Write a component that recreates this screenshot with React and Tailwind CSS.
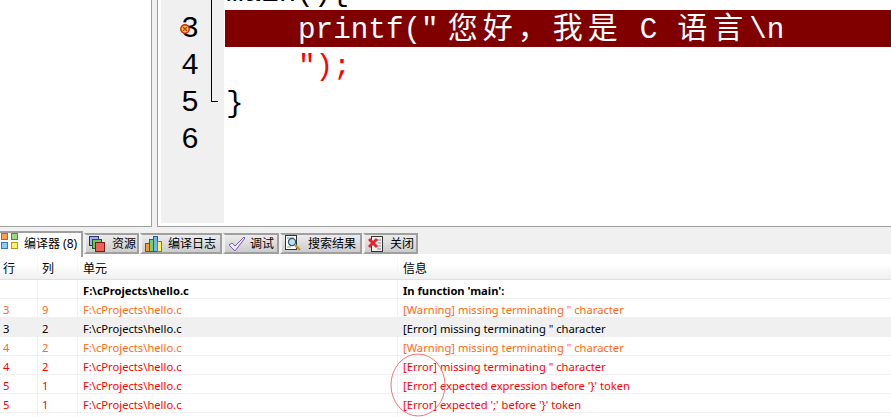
import React from "react";

const uiFont = "font-['Noto_Sans','Noto_Sans_CJK_SC',sans-serif]";
const codeFont = "font-['Liberation_Mono','Noto_Sans_CJK_SC',monospace]";

const rows = [
  { line: "", col: "", unit: "F:\\cProjects\\hello.c", msg: "In function 'main':", tone: "text-black font-bold" },
  { line: "3", col: "9", unit: "F:\\cProjects\\hello.c", msg: "[Warning] missing terminating \" character", tone: "text-[#ff6a13]" },
  { line: "3", col: "2", unit: "F:\\cProjects\\hello.c", msg: "[Error] missing terminating \" character", tone: "text-black bg-[#f0f0f0]" },
  { line: "4", col: "2", unit: "F:\\cProjects\\hello.c", msg: "[Warning] missing terminating \" character", tone: "text-[#ff6a13]" },
  { line: "4", col: "2", unit: "F:\\cProjects\\hello.c", msg: "[Error] missing terminating \" character", tone: "text-[#ff0000]" },
  { line: "5", col: "1", unit: "F:\\cProjects\\hello.c", msg: "[Error] expected expression before '}' token", tone: "text-[#ff0000]" },
  { line: "5", col: "1", unit: "F:\\cProjects\\hello.c", msg: "[Error] expected ';' before '}' token", tone: "text-[#ff0000]" },
  { line: "", col: "", unit: "", msg: "", tone: "" },
];

const GridIcon = () => (
  <svg width="17" height="16" viewBox="0 0 17 16">
    <rect x="0.5" y="0.5" width="6" height="6" fill="#ffa05a" stroke="#e0501a" />
    <rect x="10.5" y="0.5" width="6" height="6" fill="#9ad884" stroke="#4a8a3a" />
    <rect x="0.5" y="9.5" width="6" height="6" fill="#8dc8f8" stroke="#3a78b8" />
    <rect x="10.5" y="9.5" width="6" height="6" fill="#fff06a" stroke="#b09a20" />
  </svg>
);

const LayersIcon = () => (
  <svg width="16" height="16" viewBox="0 0 16 16">
    <rect x="0.5" y="0.5" width="9" height="9" fill="#a8a8f0" stroke="#30306a" />
    <rect x="3.5" y="3.5" width="9" height="9" fill="#62c862" stroke="#1f5a1f" />
    <rect x="6.5" y="6.5" width="9" height="9" fill="#f0605a" stroke="#7a1a1a" />
  </svg>
);

const BarsIcon = () => (
  <svg width="17" height="16" viewBox="0 0 17 16">
    <rect x="0.5" y="7.5" width="4" height="8" fill="#f8963e" stroke="#8a4a1a" />
    <rect x="4.5" y="3.5" width="4" height="12" fill="#78d064" stroke="#2f6a2a" />
    <rect x="8.5" y="0.5" width="4" height="15" fill="#74b4f4" stroke="#2a5a90" />
    <rect x="12.5" y="5.5" width="4" height="10" fill="#fff068" stroke="#8a8020" />
  </svg>
);

const CheckIcon = () => (
  <svg width="18" height="16" viewBox="0 0 18 16">
    <path d="M1 9 L4 7 L7 10 L16 1 L17 2 L7 15 Z" fill="#f0eafa" stroke="#7a5ab8" strokeWidth="1" />
  </svg>
);

const SearchDocIcon = () => (
  <svg width="17" height="17" viewBox="0 0 17 17">
    <rect x="0.5" y="0.5" width="11" height="14" fill="#fff" stroke="#333" />
    <path d="M2 3h7M2 12h4" stroke="#999" />
    <circle cx="7" cy="7" r="3.6" fill="#bfe0ee" stroke="#2a5a70" strokeWidth="1.2" />
    <path d="M10 10 L15 15" stroke="#c8901e" strokeWidth="2.4" />
  </svg>
);

const CloseDocIcon = () => (
  <svg width="16" height="16" viewBox="0 0 16 16">
    <rect x="3.5" y="0.5" width="11" height="15" fill="#eee" stroke="#333" />
    <path d="M9 4h4M10 7h3M10 10h3M9 13h4" stroke="#888" />
    <path d="M1 3 L9 11 M9 3 L1 11" stroke="#e8222a" strokeWidth="3" />
  </svg>
);

const tabs = [
  { label: "资源", icon: <LayersIcon />, width: "w-[55px]", gap: "gap-[7px]" },
  { label: "编译日志", icon: <BarsIcon />, width: "w-[82px]", gap: "gap-[6px]" },
  { label: "调试", icon: <CheckIcon />, width: "w-[56px]", gap: "gap-[4px]" },
  { label: "搜索结果", icon: <SearchDocIcon />, width: "w-[82px]", gap: "gap-[6px]" },
  { label: "关闭", icon: <CloseDocIcon />, width: "w-[55px]", gap: "gap-[6px]" },
];

const App = () => {
  return (
    <div className={`relative w-[891px] h-[417px] overflow-hidden bg-white ${uiFont}`}>
      {/* editor area */}
      <div className="flex h-[227px] bg-[#f0f0f0]">
        <div className="w-[152px] h-full bg-white border-r border-b border-[#a0a0a0]"></div>
        <div className="ml-[5px] flex-1 flex h-full bg-white border-l border-b border-[#a0a0a0] overflow-hidden">
          <div className="relative ml-[3px] w-[63px] h-[223px] bg-[#f0f0f0] shrink-0">
            <div className={`flex flex-col -mt-[26px] w-[38px] text-[30px] leading-[37px] text-black text-right ${codeFont}`}>
              {["2", "3", "4", "5", "6"].map((n) => (
                <div key={n} className="h-[37px]">{n === "2" ? "" : n}</div>
              ))}
            </div>
            {/* fold line */}
            <div className="absolute left-[50px] top-0 w-[7px] h-[102px] border-l border-b border-black"></div>
            {/* error marker */}
            <svg className="absolute left-[19px] top-[24px]" width="10" height="10" viewBox="0 0 10 10">
              <circle cx="5" cy="5" r="4.2" fill="#f6d21e" stroke="#d22020" strokeWidth="1.4" />
              <path d="M3 3 L7 7 M7 3 L3 7" stroke="#c83010" strokeWidth="1.2" />
            </svg>
          </div>
          <div className={`flex-1 flex flex-col -mt-[27px] ml-px text-[29.3px] leading-[37px] whitespace-pre ${codeFont}`}>
            <div className="h-[37px] text-black pl-[1px] pt-[2px]">{"main(){"}</div>
            <div className="h-[37px] bg-[#800000] text-white pl-[73px] pt-[2px]">
              {'printf("'}
              <span className="text-[30px] tracking-[5px] ml-[9px]">您好，</span>
              <span className="text-[30px] tracking-[5px]">我是</span>
              <span className="ml-[17px]">C</span>
              <span className="text-[30px] tracking-[6px] ml-[20px]">语言</span>
              <span>{"\\n"}</span>
            </div>
            <div className="h-[37px] text-[#ff0000] pl-[73px] pt-[2px]">{'");'}</div>
            <div className="h-[37px] text-black pl-[1px] pt-[2px]">{"}"}</div>
          </div>
        </div>
      </div>

      {/* tab strip */}
      <div className="flex h-[30px] pt-[4px] bg-[linear-gradient(#f0f0f0_27px,#ffffff_27px)] text-[12px] text-black">
        <div className="w-[83px] h-[26px] flex items-center gap-[6px] pl-[1px] pb-[3px] bg-white border-t-2 border-r-2 border-[#a0a0a0]">
          <div className="-translate-y-[3px]">
            <GridIcon />
          </div>
          <span className="whitespace-nowrap">编译器 (8)</span>
        </div>
        {tabs.map((tab) => (
          <div
            key={tab.label}
            className={`${tab.width} h-[21px] mt-[2px] flex items-center ${tab.gap} pl-[3px] ml-px border-2 border-t-[#a0a0a0] border-b-[#a0a0a0] border-l-[#f0f0f0] border-r-[#a0a0a0] bg-[linear-gradient(#ececec,#cccccc)]`}
          >
            {tab.icon}
            <span className="whitespace-nowrap">{tab.label}</span>
          </div>
        ))}
      </div>

      {/* message table */}
      <div className="flex h-[23px] items-center text-[12px] text-black bg-[linear-gradient(#ffffff_30%,#f0f0f0)] border-b border-[#e0e0e0]">
        <div className="w-[38px] h-full flex items-center pl-[3px] pt-[2px] border-r border-[#f4f4f4]">行</div>
        <div className="w-[40px] h-full flex items-center pl-[4px] pt-[2px] border-r border-[#f4f4f4]">列</div>
        <div className="w-[320px] h-full flex items-center pl-[5px] pt-[2px] border-r border-[#f4f4f4]">单元</div>
        <div className="flex-1 h-full flex items-center pl-[5px] pt-[2px]">信息</div>
      </div>
      {rows.map((row, i) => (
        <div key={i} className={`flex h-[19px] items-center text-[11.2px] whitespace-pre border-b border-[#f0f0f0] ${row.tone}`}>
          <div className="w-[38px] h-full flex items-center pl-[3px] pt-[4px] border-r border-[#f0f0f0]">{row.line}</div>
          <div className="w-[40px] h-full flex items-center pl-[4px] pt-[4px] border-r border-[#f0f0f0]">{row.col}</div>
          <div className="w-[320px] h-full flex items-center pl-[5px] pt-[4px] border-r border-[#f0f0f0]">{row.unit}</div>
          <div className="flex-1 h-full flex items-center pl-[5px] pt-[4px]">{row.msg}</div>
        </div>
      ))}

      {/* hand drawn annotation */}
      <svg className="absolute left-[388px] top-[352px]" width="60" height="66" viewBox="0 0 60 66">
        <ellipse cx="30" cy="33" rx="27" ry="31" fill="none" stroke="#f07878" strokeWidth="1" />
      </svg>
    </div>
  );
};

export default App;
